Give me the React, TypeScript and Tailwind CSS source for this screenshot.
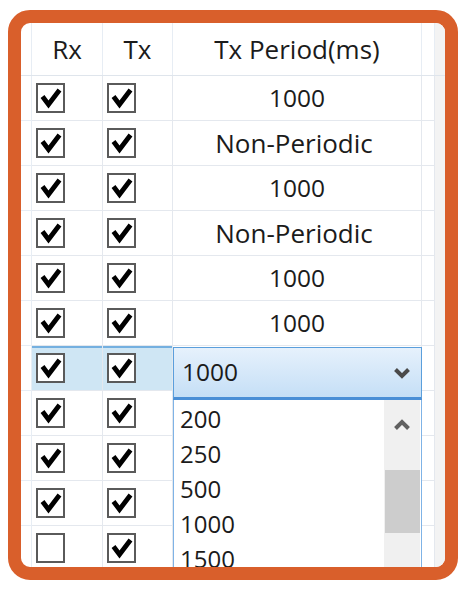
import React from "react";

type Row = { rx: boolean; tx: boolean; p?: string; sel?: boolean };

const ROWS: Row[] = [
  { rx: true, tx: true, p: "1000" },
  { rx: true, tx: true, p: "Non-Periodic" },
  { rx: true, tx: true, p: "1000" },
  { rx: true, tx: true, p: "Non-Periodic" },
  { rx: true, tx: true, p: "1000" },
  { rx: true, tx: true, p: "1000" },
  { rx: true, tx: true, sel: true },
  { rx: true, tx: true },
  { rx: true, tx: true },
  { rx: true, tx: true },
  { rx: false, tx: true },
];

function Check({ on }: { on: boolean }) {
  return (
    <div className="w-[29px] h-[30px] border-2 border-[#5a5a5a] bg-white shrink-0">
      {on && (
        <svg width="25" height="26" viewBox="0 0 25 26">
          <polyline
            points="4.5,11.5 10.5,19.5 21.5,5"
            fill="none"
            stroke="#000"
            strokeWidth="4.8"
            strokeLinejoin="miter"
          />
        </svg>
      )}
    </div>
  );
}

export default function App() {
  const font = { fontFamily: '"Open Sans", "Noto Sans", sans-serif' };
  return (
    <div className="w-[474px] h-[598px] bg-white pt-[10px] pl-[8px]" style={font}>
      <div className="w-[450px] h-[570px] border-[13px] border-[#d95f2b] rounded-[22px] overflow-hidden bg-white">
        <div className="relative w-[424px] h-[544px] flex flex-col text-[24.5px] text-[#1b1b1b] leading-none">
          {/* header */}
          <div className="flex h-[53px] shrink-0 border-b border-[#dfe5ec] text-[26px]">
            <div className="w-[11px] border-r border-[#e7edf4]" />
            <div className="w-[71px] border-r border-[#e7edf4] flex items-center justify-center">Rx</div>
            <div className="w-[70px] border-r border-[#e7edf4] flex items-center justify-center">Tx</div>
            <div className="w-[249px] border-r border-[#e7edf4] flex items-center justify-center">Tx Period(ms)</div>
            <div className="w-[13px] border-r border-[#e7edf4]" />
            <div className="flex-1 bg-[#f3f3f3]" />
          </div>
          {ROWS.map((r, i) => (
            <div key={i} className="flex h-[45px] shrink-0">
              <div className="w-[11px] border-r border-b border-[#e7edf4]" />
              <div
                className={
                  "w-[71px] border-r border-b border-[#e4e8ee] flex items-center pl-[4px] " +
                  (r.sel ? "bg-[#cfe6f4] shadow-[inset_0_2px_0_#74b0e0]" : "")
                }
              >
                <Check on={r.rx} />
              </div>
              <div
                className={
                  "w-[70px] border-r border-b border-[#e4e8ee] flex items-center pl-[4px] " +
                  (r.sel ? "bg-[#cfe6f4] shadow-[inset_0_2px_0_#74b0e0]" : "")
                }
              >
                <Check on={r.tx} />
              </div>
              <div
                className={
                  "w-[249px] border-r border-b border-[#e4e8ee] flex items-center justify-center " +
                  (r.p === "Non-Periodic" ? "text-[26px] pr-[6px]" : "")
                }
              >
                {r.p ?? ""}
              </div>
              <div className="w-[13px] border-r border-b border-[#e4e8ee]" />
              <div className="flex-1 bg-[#f3f3f3]" />
            </div>
          ))}

          {/* combobox + open list */}
          <div className="absolute left-[152px] top-[324px] w-[249px] bottom-0 flex flex-col">
            <div className="h-[53px] shrink-0 border border-b-[3px] border-[#5b9fdc] border-b-[#4a8fd6] bg-gradient-to-b from-[#e6f1fc] to-[#c5dff6] flex items-center pl-[8px] pr-[11px]">
              <span className="flex-1">1000</span>
              <svg width="16" height="12" viewBox="0 0 16 12">
                <polyline points="1.5,2.5 8,9 14.5,2.5" fill="none" stroke="#4a4a4a" strokeWidth="4" />
              </svg>
            </div>
            <div className="flex-1 flex border-x border-[#7fb3e6] bg-white">
              <div className="flex-1 flex flex-col pl-[6px] pt-[1px] text-[24px]">
                {["200", "250", "500", "1000", "1500"].map((v) => (
                  <div key={v} className="h-[35px] shrink-0 flex items-center">
                    {v}
                  </div>
                ))}
              </div>
              <div className="w-[36px] mr-[1px] bg-[#f0f0f0] flex flex-col items-center">
                <div className="h-[48px] flex items-center justify-center pt-[2px]">
                  <svg width="16" height="12" viewBox="0 0 16 12">
                    <polyline points="1.5,9.5 8,3 14.5,9.5" fill="none" stroke="#606060" strokeWidth="4" />
                  </svg>
                </div>
                <div className="mt-[22px] w-[35px] h-[63px] bg-[#cdcdcd]" />
              </div>
            </div>
          </div>
        </div>
      </div>
    </div>
  );
}
